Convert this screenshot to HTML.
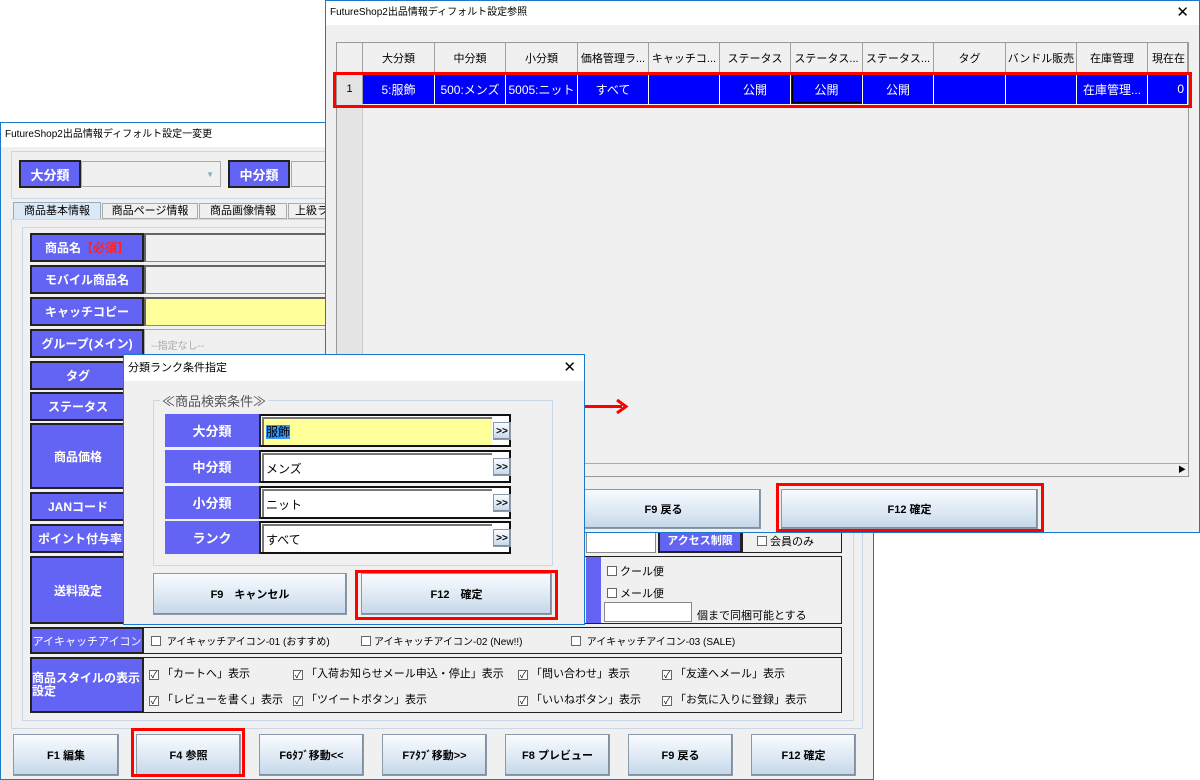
<!DOCTYPE html>
<html><head><meta charset="utf-8"><style>
*{box-sizing:border-box;margin:0;padding:0}
body{width:1200px;height:780px;background:#fff;position:relative;overflow:hidden;font-family:"Liberation Sans","Noto Sans CJK JP",sans-serif;font-size:12px;color:#000}
.a{position:absolute}
.win{position:absolute;background:#f0f0f0;border:1px solid #1979ca}
.tb{position:absolute;left:0;right:0;top:0;background:#fff;font-size:10px;padding-left:4px}
.lb{position:absolute;background:#6464f4;color:#fff;font-weight:bold;border:2px solid #222;display:flex;align-items:center;justify-content:center;font-size:12px;white-space:nowrap;overflow:hidden}
.in{position:absolute;background:#f0f0f0;border:1px solid #888;border-top:2px solid #666;border-left:2px solid #666}
.btn{position:absolute;background:linear-gradient(#f8fbff,#dbe7f3 60%,#c4d6e8);border:1px solid #8a9aaa;box-shadow:inset -1px -1px 0 #7f8fa0;display:flex;align-items:center;justify-content:center;font-size:11px;font-weight:bold}
.red{position:absolute;border:3px solid #f00}
.cb{display:inline-block;width:10px;height:10px;border:1px solid #666;background:#fff;vertical-align:-1px;margin-right:3px;font-size:9px;line-height:8px;text-align:center}
.row{position:absolute;border:1px solid #222;background:#f0f0f0}
.c{position:absolute;top:0;height:30px;border-right:1px solid #a0a0a0;display:flex;align-items:center;justify-content:center;font-size:11px}
.r{position:absolute;top:0;height:30px;border-right:1px solid #fff;display:flex;align-items:center;justify-content:center;color:#fff;font-size:12px}
</style></head><body>

<!-- left window -->
<div class="win" style="left:0;top:122px;width:874px;height:658px">
 <div class="tb" style="height:24px;line-height:24px">FutureShop2出品情報ディフォルト設定一変更</div>
 <div class="a" style="left:10px;top:28px;width:860px;height:48px;border:1px solid #c8d8e8"></div>
 <div class="lb" style="left:18px;top:37px;width:62px;height:28px;font-size:13px">大分類</div>
 <div class="in" style="left:80px;top:38px;width:140px;height:26px;border:1px solid #aaa"><span class="a" style="right:6px;top:8px;color:#8ab;font-size:8px">▼</span></div>
 <div class="lb" style="left:227px;top:37px;width:62px;height:28px;font-size:13px">中分類</div>
 <div class="in" style="left:290px;top:38px;width:40px;height:26px;border:1px solid #aaa"></div>
 <div class="a" style="left:12px;top:79px;width:88px;height:18px;background:#dbe8f5;border:1px solid #9ab;border-bottom:none;font-size:11px;text-align:center;line-height:17px">商品基本情報</div>
 <div class="a" style="left:101px;top:80px;width:96px;height:16px;background:#f0f0f0;border:1px solid #aaa;font-size:11px;text-align:center;line-height:15px">商品ページ情報</div>
 <div class="a" style="left:198px;top:80px;width:88px;height:16px;background:#f0f0f0;border:1px solid #aaa;font-size:11px;text-align:center;line-height:15px">商品画像情報</div>
 <div class="a" style="left:287px;top:80px;width:50px;height:16px;background:#f0f0f0;border:1px solid #aaa;font-size:11px;line-height:15px;padding-left:6px">上級ラ</div>
 <div class="a" style="left:10px;top:96px;width:852px;height:510px;border:1px solid #c8d8e8;background:#f0f0f0"></div>
 <div class="a" style="left:21px;top:104px;width:832px;height:494px;border:1px solid #c8d8e8"></div>

 <div class="lb" style="left:29px;top:110px;width:114px;height:29px">商品名<span style="color:#f22">【必須】</span></div>
 <div class="in" style="left:143px;top:110px;width:200px;height:29px"></div>
 <div class="lb" style="left:29px;top:142px;width:114px;height:29px">モバイル商品名</div>
 <div class="in" style="left:143px;top:142px;width:200px;height:29px"></div>
 <div class="lb" style="left:29px;top:174px;width:114px;height:29px">キャッチコピー</div>
 <div class="in" style="left:143px;top:174px;width:200px;height:29px;background:#ffff99"></div>
 <div class="lb" style="left:29px;top:206px;width:114px;height:29px">グループ(メイン)</div>
 <div class="in" style="left:143px;top:206px;width:200px;height:29px;border:1px solid #aaa;color:#aaa;font-size:10px;padding:7px 0 0 6px">--指定なし--</div>
 <div class="lb" style="left:29px;top:238px;width:96px;height:29px">タグ</div>
 <div class="lb" style="left:29px;top:269px;width:96px;height:29px">ステータス</div>
 <div class="lb" style="left:29px;top:300px;width:96px;height:66px">商品価格</div>
 <div class="lb" style="left:29px;top:369px;width:96px;height:29px">JANコード</div>
 <div class="lb" style="left:29px;top:401px;width:96px;height:29px;justify-content:flex-start;padding-left:6px">ポイント付与率</div>
 <div class="lb" style="left:29px;top:433px;width:96px;height:68px">送料設定</div>
 <div class="row" style="left:29px;top:433px;width:812px;height:68px;border:1px solid #222;background:transparent"></div>
 <div class="a" style="left:585px;top:434px;width:15px;height:66px;background:#6464f4"></div>
 <div class="a" style="left:606px;top:440px;font-size:11px"><span class="cb"></span>クール便</div>
 <div class="a" style="left:606px;top:462px;font-size:11px"><span class="cb"></span>メール便</div>
 <div class="a" style="left:603px;top:479px;width:88px;height:20px;background:#fff;border:1px solid #888"></div>
 <div class="a" style="left:696px;top:484px;font-size:11px">個まで同梱可能とする</div>
 <div class="in" style="left:585px;top:408px;width:70px;height:22px;background:#fff;border:1px solid #888"></div>
 <div class="lb" style="left:657px;top:403px;width:84px;height:27px;font-size:11px">アクセス制限</div>
 <div class="a" style="left:741px;top:403px;width:100px;height:27px;border:1px solid #222;font-size:11px;padding:6px 0 0 14px"><span class="cb"></span>会員のみ</div>

 <div class="row" style="left:29px;top:504px;width:812px;height:27px"></div>
 <div class="lb" style="left:29px;top:504px;width:114px;height:27px;font-size:11px;font-weight:normal">アイキャッチアイコン</div>
 <div class="a" style="left:150px;top:510px;font-size:10px"><span class="cb"></span> アイキャッチアイコン-01 (おすすめ)</div>
 <div class="a" style="left:360px;top:510px;font-size:10px"><span class="cb"></span>アイキャッチアイコン-02 (New!!)</div>
 <div class="a" style="left:570px;top:510px;font-size:10px"><span class="cb"></span> アイキャッチアイコン-03 (SALE)</div>

 <div class="row" style="left:29px;top:534px;width:812px;height:56px"></div>
 <div class="lb" style="left:29px;top:534px;width:114px;height:56px;font-size:12px;line-height:13px;justify-content:flex-start;text-align:left;white-space:normal">商品スタイルの表示<br>設定</div>
 <div class="a" style="left:148px;top:542px;font-size:11px"><span class="cb">✓</span>「カートへ」表示</div>
 <div class="a" style="left:292px;top:542px;font-size:11px"><span class="cb">✓</span>「入荷お知らせメール申込・停止」表示</div>
 <div class="a" style="left:517px;top:542px;font-size:11px"><span class="cb">✓</span>「問い合わせ」表示</div>
 <div class="a" style="left:661px;top:542px;font-size:11px"><span class="cb">✓</span>「友達へメール」表示</div>
 <div class="a" style="left:148px;top:568px;font-size:11px"><span class="cb">✓</span>「レビューを書く」表示</div>
 <div class="a" style="left:292px;top:568px;font-size:11px"><span class="cb">✓</span>「ツイートボタン」表示</div>
 <div class="a" style="left:517px;top:568px;font-size:11px"><span class="cb">✓</span>「いいねボタン」表示</div>
 <div class="a" style="left:661px;top:568px;font-size:11px"><span class="cb">✓</span>「お気に入りに登録」表示</div>

 <div class="btn" style="left:12px;top:611px;width:106px;height:42px">F1 編集</div>
 <div class="btn" style="left:135px;top:611px;width:105px;height:42px">F4 参照</div>
 <div class="btn" style="left:258px;top:611px;width:105px;height:42px">F6ﾀﾌﾞ移動&lt;&lt;</div>
 <div class="btn" style="left:381px;top:611px;width:105px;height:42px">F7ﾀﾌﾞ移動&gt;&gt;</div>
 <div class="btn" style="left:504px;top:611px;width:105px;height:42px">F8 プレビュー</div>
 <div class="btn" style="left:627px;top:611px;width:105px;height:42px">F9 戻る</div>
 <div class="btn" style="left:750px;top:611px;width:105px;height:42px">F12 確定</div>
 <div class="red" style="left:130px;top:605px;width:114px;height:49px"></div>
</div>

<!-- right window -->
<div class="win" style="left:325px;top:0;width:875px;height:533px">
 <div class="tb" style="height:24px;line-height:24px;font-size:10px">FutureShop2出品情報ディフォルト設定参照<span class="a" style="right:10px;top:0;font-size:15px">✕</span></div>
 <div class="a" style="left:10px;top:41px;width:853px;height:435px;background:#f0f0f0;border:1px solid #999"></div>
 <div class="a" style="left:11px;top:42px;width:851px;height:30px;background:#f0f0f0"></div>
 <div class="a" style="left:11px;top:72px;width:26px;height:390px;background:#e4e4e4;border-right:1px solid #ccc"></div>
 <div class="a" style="left:11px;top:462px;width:851px;height:13px;background:#f0f0f0;border-top:1px solid #aaa"><span class="a" style="right:2px;top:0;font-size:8px">▶</span></div>
 <div class="a" style="left:11px;top:42px;height:30px;width:851px">
  <div class="c" style="left:0;width:26px"></div>
  <div class="c" style="left:26px;width:72px">大分類</div>
  <div class="c" style="left:98px;width:71px">中分類</div>
  <div class="c" style="left:169px;width:72px">小分類</div>
  <div class="c" style="left:241px;width:71px">価格管理ラ...</div>
  <div class="c" style="left:312px;width:71px">キャッチコ...</div>
  <div class="c" style="left:383px;width:71px">ステータス</div>
  <div class="c" style="left:454px;width:72px">ステータス...</div>
  <div class="c" style="left:526px;width:71px">ステータス...</div>
  <div class="c" style="left:597px;width:72px">タグ</div>
  <div class="c" style="left:669px;width:71px">バンドル販売</div>
  <div class="c" style="left:740px;width:71px">在庫管理</div>
  <div class="c" style="left:811px;width:40px;justify-content:flex-start;padding-left:4px">現在在</div>
 </div>
 <div class="a" style="left:11px;top:73px;height:30px;width:851px;background:#0000ff">
  <div class="c" style="left:0;width:26px;background:#e4e4e4">1</div>
  <div class="r" style="left:26px;width:72px">5:服飾</div>
  <div class="r" style="left:98px;width:71px">500:メンズ</div>
  <div class="r" style="left:169px;width:72px">5005:ニット</div>
  <div class="r" style="left:241px;width:71px">すべて</div>
  <div class="r" style="left:312px;width:71px"></div>
  <div class="r" style="left:383px;width:71px">公開</div>
  <div class="r" style="left:454px;width:72px;outline:1px solid #000;outline-offset:-2px">公開</div>
  <div class="r" style="left:526px;width:71px">公開</div>
  <div class="r" style="left:597px;width:72px"></div>
  <div class="r" style="left:669px;width:71px"></div>
  <div class="r" style="left:740px;width:71px">在庫管理...</div>
  <div class="r" style="left:811px;width:40px;justify-content:flex-end;padding-right:3px">0</div>
 </div>
 <div class="red" style="left:7px;top:71px;width:859px;height:36px"></div>
 <div class="btn" style="left:240px;top:488px;width:195px;height:40px">F9 戻る</div>
 <div class="btn" style="left:455px;top:488px;width:257px;height:40px">F12 確定</div>
 <div class="red" style="left:450px;top:482px;width:268px;height:49px"></div>
</div>

<!-- arrow -->
<div class="a" style="left:566px;top:405px;width:56px;height:3px;background:#f00"></div>
<svg class="a" style="left:614px;top:398px" width="20" height="18"><path d="M3 2 L12 8.5 L3 15" fill="none" stroke="#f00" stroke-width="3"/></svg>

<!-- dialog -->
<div class="win" style="left:123px;top:354px;width:462px;height:271px;border-color:#1979ca">
 <div class="tb" style="height:26px;line-height:26px;font-size:11px">分類ランク条件指定<span class="a" style="right:8px;top:0;font-size:15px">✕</span></div>
 <div class="a" style="left:29px;top:45px;width:400px;height:166px;border:1px solid #c8d8e8"></div>
 <div class="a" style="left:36px;top:36px;background:#f0f0f0;color:#555;font-size:13px;padding:0 2px">≪商品検索条件≫</div>
 <div class="a" style="left:41px;top:59px;width:346px;height:33px;border:2px solid #111;background:#fff">
  <div class="lb" style="left:-2px;top:-2px;width:96px;height:33px;border:none;border-right:2px solid #222;font-size:13px">大分類</div>
  <div class="a" style="left:95px;top:1px;width:230px;height:28px;background:#ffff99;border-left:2px solid #777;border-top:2px solid #777;padding:4px 0 0 2px;font-size:12px"><span style="background:#39f;color:#000">服飾</span></div>
  <div class="btn" style="left:326px;top:6px;width:18px;height:18px;font-size:10px">&gt;&gt;</div>
 </div>
 <div class="a" style="left:41px;top:95px;width:346px;height:33px;border:2px solid #111;background:#fff">
  <div class="lb" style="left:-2px;top:-2px;width:96px;height:33px;border:none;border-right:2px solid #222;font-size:13px">中分類</div>
  <div class="a" style="left:95px;top:1px;width:230px;height:28px;border-left:2px solid #777;border-top:2px solid #777;padding:5px 0 0 2px">メンズ</div>
  <div class="btn" style="left:326px;top:6px;width:18px;height:18px;font-size:10px">&gt;&gt;</div>
 </div>
 <div class="a" style="left:41px;top:131px;width:346px;height:33px;border:2px solid #111;background:#fff">
  <div class="lb" style="left:-2px;top:-2px;width:96px;height:33px;border:none;border-right:2px solid #222;font-size:13px">小分類</div>
  <div class="a" style="left:95px;top:1px;width:230px;height:28px;border-left:2px solid #777;border-top:2px solid #777;padding:5px 0 0 2px">ニット</div>
  <div class="btn" style="left:326px;top:6px;width:18px;height:18px;font-size:10px">&gt;&gt;</div>
 </div>
 <div class="a" style="left:41px;top:166px;width:346px;height:33px;border:2px solid #111;background:#fff">
  <div class="lb" style="left:-2px;top:-2px;width:96px;height:33px;border:none;border-right:2px solid #222;font-size:13px">ランク</div>
  <div class="a" style="left:95px;top:1px;width:230px;height:28px;border-left:2px solid #777;border-top:2px solid #777;padding:5px 0 0 2px">すべて</div>
  <div class="btn" style="left:326px;top:6px;width:18px;height:18px;font-size:10px">&gt;&gt;</div>
 </div>
 <div class="btn" style="left:29px;top:218px;width:194px;height:42px">F9　キャンセル</div>
 <div class="btn" style="left:237px;top:218px;width:191px;height:42px">F12　確定</div>
 <div class="red" style="left:231px;top:215px;width:203px;height:50px"></div>
</div>
</body></html>
